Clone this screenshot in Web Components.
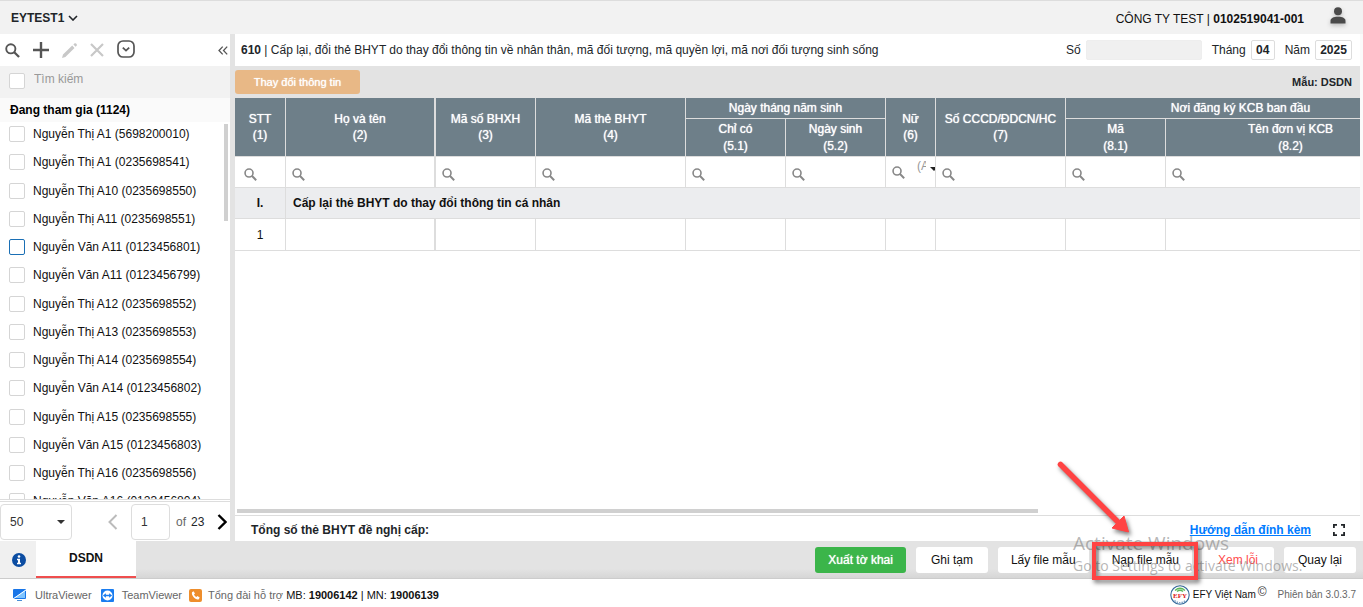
<!DOCTYPE html>
<html lang="vi">
<head>
<meta charset="utf-8">
<meta name="viewport" content="width=device-width, initial-scale=1">
<title>EFY - BHXH 610</title>
<style>
  html, body { margin: 0; }
  body {
    font: 12px/16px "Liberation Sans", Arial, sans-serif;
    color: #212529;
    background: #fff;
  }
</style>
</head>
<body>
<efy-app></efy-app>

<script>
const define = (name, html, setup) => {
  const tpl = document.createElement('template');
  tpl.innerHTML = `<style>*{box-sizing:border-box}</style>${html}`;
  customElements.define(name, class extends HTMLElement {
    constructor() {
      super();
      this.attachShadow({ mode: 'open' }).append(tpl.content.cloneNode(true));
    }
    connectedCallback() { if (setup) setup(this, this.shadowRoot); }
  });
};

/* Icons: [width, height, svg content] */
const ICONS = {
  search: [16, 16, '<circle cx="6.2" cy="6.2" r="4.9" fill="none" stroke="currentColor" stroke-width="2"/><path d="M9.6 9.6l5.400 5.400" stroke="currentColor" stroke-width="2.4"/>'],
  plus: [16, 16, '<path d="M8 0v16M0 8h16" stroke="currentColor" stroke-width="2.4"/>'],
  pencil: [15, 15, '<path d="M0 15l1-3.4L10.2 2.600l2.300 2.300L3.400 14zM11.400 1.500l.9-.9a1.300 1.300 0 0 1 1.800 0l.4.4a1.300 1.300 0 0 1 0 1.800l-.9.9z" fill="currentColor"/>'],
  close: [14, 14, '<path d="M1 1l12 12M13 1L1 13" stroke="currentColor" stroke-width="2.2"/>'],
  more: [18, 18, '<rect x="1" y="1" width="16" height="16" rx="5" fill="none" stroke="currentColor" stroke-width="1.7"/><path d="M5.800 7.600L9 10.600l3.200-3" fill="none" stroke="currentColor" stroke-width="1.800"/>'],
  collapse: [10, 9, '<path d="M4.700.6L1 4.500l3.700 3.900M9.200.6L5.500 4.500l3.700 3.900" fill="none" stroke="currentColor" stroke-width="1.300"/>'],
  down: [10, 6, '<path d="M1 1l4 4 4-4" fill="none" stroke="currentColor" stroke-width="1.600"/>'],
  prev: [10, 16, '<path d="M8.500 1L1.500 8l7 7" fill="none" stroke="currentColor" stroke-width="2"/>'],
  next: [10, 16, '<path d="M1.500 1l7 7-7 7" fill="none" stroke="currentColor" stroke-width="2.400"/>'],
  user: [16, 17, '<circle cx="8" cy="4.300" r="4" fill="currentColor"/><path d="M.5 16.500v-2.700c0-2.500 3-4 7.500-4s7.500 1.500 7.500 4v2.700z" fill="currentColor"/>'],
  caret: [8, 4, '<path d="M0 0h8L4 4z" fill="currentColor"/>'],
  info: [14, 14, '<circle cx="7" cy="7" r="7" fill="#0c4da2"/><circle cx="7" cy="3.500" r="1.300" fill="#fff"/><path d="M5 5.800h3v4h1v1.500H5V9.800h1V7.300H5z" fill="#fff"/>'],
  full: [12, 12, '<path d="M.9 4V.9H4M8 .9h3.100V4M11.100 8v3.100H8M4 11.100H.9V8" fill="none" stroke="currentColor" stroke-width="1.800"/>'],
  ultra: [14, 14, '<rect x="0" y="1" width="13" height="10" rx="1" fill="#1976e8"/><path d="M1 10L12 2v8z" fill="#7fc4ff"/><path d="M0 11L13 2" stroke="#fff" stroke-width="1"/><path d="M4 12h5v1H4z" fill="#4a8fd8"/>'],
  team: [13, 13, '<rect width="13" height="13" rx="1" fill="#1a7df0"/><circle cx="6.500" cy="6.500" r="5" fill="#fff"/><path d="M1.900 6.500l3-2.300v1.500h3.200V4.200l3 2.300-3 2.300V7.300H4.900v1.500z" fill="#1a7df0"/>'],
  phone: [13, 13, '<rect width="13" height="13" rx="2" fill="#ee8e2c"/><path d="M3 3.200l1.500-1 1.500 2.300-1 1c.4 1 1.300 2 2.400 2.500l1-.9L10.700 8.600 9.800 10.300C7 11.600 2 6.500 3 3.200z" fill="#fff"/>'],
};
customElements.define('ui-icon', class extends HTMLElement {
  connectedCallback() {
    if (this.shadowRoot) return;
    const [w, h, body] = ICONS[this.getAttribute('name')];
    const size = +this.getAttribute('size') || w;
    this.attachShadow({ mode: 'open' }).innerHTML =
      `<style>:host{display:inline-flex;flex:none}svg{display:block}</style>
       <svg width="${size}" height="${Math.round(size * h / w)}" viewBox="0 0 ${w} ${h}" aria-hidden="true">${body}</svg>`;
  }
});

define('top-bar', `
<style>
  :host { display: flex; align-items: center; justify-content: space-between; height: 34px;
    background: #f2f2f2; border-top: 1px solid #ddd; padding: 0 17px 0 11px; }
  button { all: unset; display: flex; align-items: center; gap: 4px; font-weight: bold; }
  .right { display: flex; align-items: center; gap: 26px; color: #111; padding-top: 2px; }
  .user { color: #4a4a4a; filter: drop-shadow(0 2px 2px #bbb); padding-bottom: 6px; }
</style>
<button type="button">EYTEST1 <ui-icon name="down"></ui-icon></button>
<div class="right"><span>CÔNG TY TEST | <b>0102519041-001</b></span>
<ui-icon class="user" name="user"></ui-icon></div>`);

define('member-row', `
<style>
  :host { display: block; height: 28px; }
  label { display: flex; align-items: center; gap: 8px; height: 24px; padding-left: 9px; color: #111; white-space: nowrap; }
  input { appearance: none; flex: none; width: 16px; height: 16px; margin: 0; border: 1px solid #d5d5d5; border-radius: 2px; background: #fff; }
  :host([focused]) input { border-color: #1a6fb5; }
</style>
<label><input type="checkbox"><span><slot></slot></span></label>`);

const MEMBERS = ['Nguyễn Thị A1 (5698200010)', 'Nguyễn Thị A1 (0235698541)', 'Nguyễn Thị A10 (0235698550)',
  'Nguyễn Thị A11 (0235698551)', 'Nguyễn Văn A11 (0123456801)', 'Nguyễn Văn A11 (0123456799)',
  'Nguyễn Thị A12 (0235698552)', 'Nguyễn Thị A13 (0235698553)', 'Nguyễn Thị A14 (0235698554)',
  'Nguyễn Văn A14 (0123456802)', 'Nguyễn Thị A15 (0235698555)', 'Nguyễn Văn A15 (0123456803)',
  'Nguyễn Thị A16 (0235698556)', 'Nguyễn Văn A16 (0123456804)'];

define('side-panel', `
<style>
  :host { display: flex; flex-direction: column; width: 230px; flex: none; min-height: 0; background: #fff; }
  button { all: unset; display: flex; align-items: center; }
  .tools { display: flex; align-items: center; gap: 13px; height: 32px; padding: 0 2px 0 5px; color: #555; flex: none; }
  .tools .off { color: #c8c8c8; }
  .tools :last-child { margin-left: auto; }
  .tools .more { padding-bottom: 2px; }
  .search { display: flex; align-items: center; gap: 8px; height: 32px; padding: 0 0 2px 9px; background: #f2f2f2; flex: none; }
  .search [type=checkbox] { appearance: none; width: 16px; height: 16px; margin: 0; border: 1px solid #d5d5d5; border-radius: 2px; background: #fff; }
  .search [type=text] { flex: 1; min-width: 0; border: 0; padding: 0 1px 4px; background: none; font: inherit; outline: 0; }
  ::placeholder { color: #999; opacity: 1; }
  h2 { margin: 0; padding-left: 10px; font-size: 12px; line-height: 24px; background: #fafafa; color: #000; flex: none; }
  .list { position: relative; flex: 1 1 0; min-height: 0; overflow: hidden; }
  .thumb { position: absolute; top: 2px; right: 2px; width: 4px; height: 97px; background: #d0d0d0; }
  member-row:nth-of-type(4n+2) { height: 29px; }
  .pager { display: flex; align-items: center; height: 42px; padding-top: 3px; flex: none; border-top: 1px solid #ddd; position: relative; }
  .rule { position: absolute; left: 0; right: 0; top: 1px; height: 1px; background: #ddd; }
  .size { display: flex; align-items: center; position: relative; }
  .size ui-icon { position: absolute; right: 7px; color: #333; }
  select, .page { appearance: none; height: 36px; border: 1px solid #ddd; border-radius: 4px; background: #fff; font: inherit; color: #333; margin: 0; padding: 0 9px; }
  select { width: 72px; } .page { width: 39px; }
  .prev { color: #bbb; margin: 0 13px 0 36px; } .next { color: #000; margin-left: 13px; }
  .of { color: #666; margin: 0 5px 0 6px; }
</style>
<div class="tools">
  <button aria-label="Tìm"><ui-icon name="search" size="15"></ui-icon></button>
  <button aria-label="Thêm"><ui-icon name="plus"></ui-icon></button>
  <button class="off" aria-label="Sửa"><ui-icon name="pencil"></ui-icon></button>
  <button class="off" aria-label="Xóa"><ui-icon name="close"></ui-icon></button>
  <button class="more" aria-label="Thao tác khác"><ui-icon name="more"></ui-icon></button>
  <button aria-label="Thu gọn"><ui-icon name="collapse"></ui-icon></button>
</div>
<div class="search"><input type="checkbox" aria-label="Chọn tất cả"><input type="text" placeholder="Tìm kiếm" aria-label="Tìm kiếm"></div>
<h2>Đang tham gia (1124)</h2>
<div class="list"><div class="thumb"></div></div>
<div class="pager">
  <span class="rule"></span>
  <span class="size"><select aria-label="Số dòng"><option>50</option></select><ui-icon name="caret"></ui-icon></span>
  <button class="prev" aria-label="Trang trước"><ui-icon name="prev"></ui-icon></button>
  <input class="page" value="1" aria-label="Trang">
  <span class="of">of</span><span>23</span>
  <button class="next" aria-label="Trang sau"><ui-icon name="next"></ui-icon></button>
</div>`, (el, root) => {
  const list = root.querySelector('.list');
  MEMBERS.forEach((name, i) => {
    const row = document.createElement('member-row');
    row.textContent = name;
    if (i === 4) row.setAttribute('focused', '');
    list.append(row);
  });
});

define('form-heading', `
<style>
  :host { display: flex; align-items: center; justify-content: space-between; height: 32px; padding: 0 8px 0 6px; background: #fff; flex: none; white-space: nowrap; }
  .period { display: flex; align-items: center; gap: 5px; }
  label + input + label { margin-left: 5px; }
  input { height: 20px; border: 1px solid #ddd; border-radius: 2px; padding: 0; font: bold 12px "Liberation Sans", Arial, sans-serif; color: #212529; text-align: center; background: #fff; }
  #no { width: 116px; background: #f0f0f0; border-color: #eee; } #month { width: 24px; } #year { width: 37px; }
</style>
<span><b>610</b> | Cấp lại, đổi thẻ BHYT do thay đổi thông tin về nhân thân, mã đối tượng, mã quyền lợi, mã nơi đối tượng sinh sống</span>
<div class="period"><label for="no">Số</label><input id="no" disabled><label for="month">Tháng</label><input id="month" value="04"><label for="year">Năm</label><input id="year" value="2025"></div>`);

define('form-toolbar', `
<style>
  :host { display: flex; align-items: center; justify-content: space-between; height: 32px; padding-right: 8px; background: #e3e3e3; flex: none; font-size: 11px; font-weight: bold; }
  button { width: 125px; height: 24px; border: 0; border-radius: 3px; padding: 0; background: #e8b886; color: #fff; font: inherit; font-weight: normal; text-shadow: 0 0 1px #fff; }
</style>
<button type="button">Thay đổi thông tin</button><span>Mẫu: DSDN</span>`);

define('declaration-grid', `
<style>
  :host { display: block; flex: 1 1 0; min-height: 0; overflow: hidden; position: relative; background: #fff; }
  table { table-layout: fixed; width: 1180px; border-collapse: separate; border-spacing: 0; color: #111; }
  th, td { padding: 0; border: 0 solid #ddd; border-left-width: 1px; border-bottom-width: 1px; }
  .first { border-left-width: 0; } .pin { border-right-width: 1px; }
  th { background: #6e7f89; color: #fff; line-height: 16px; font-weight: normal; text-shadow: 0 0 1px #fff; }
  .sub th { line-height: 17px; }
  .h1 { height: 21px; } .h2 { height: 38px; }
  .filter td { height: 31px; }
  .box { display: flex; align-items: center; gap: 4px; height: 30px; padding-left: 6px; overflow: hidden; color: #888; }
  .first .box { padding-left: 9px; }
  .box ui-icon { padding-top: 4px; }
  .box input { flex: 1; min-width: 0; width: 0; border: 0; padding: 0; background: none; font: inherit; outline: 0; }
  .gender ui-icon:first-child { padding-top: 0; }
  .gender { gap: 0; }
  select { appearance: none; border: 0; margin: 0 4px 13px 12px; padding: 0; background: none; font: inherit; color: #999; width: 9px; flex: none; overflow: hidden; }
  .gender ui-icon + select + ui-icon { color: #222; padding-top: 0; margin-bottom: 6px; }
  .group td { height: 31px; background: #ecedef; font-weight: bold; }
  .group td + td { padding-left: 7px; border-left-color: #ddd; }
  .data td { height: 32px; }
  .c { text-align: center; }
  .bar { position: absolute; left: 2px; right: 322px; bottom: 2px; height: 4px; background: #d0d0d0; }
</style>
<table>
  <colgroup><col style="width:50px"><col style="width:150px"><col style="width:100px"><col style="width:150px"><col style="width:100px"><col style="width:100px"><col style="width:50px"><col style="width:130px"><col style="width:100px"><col style="width:250px"></colgroup>
  <thead>
    <tr class="h1"><th class="first" rowspan="2">STT<br>(1)</th><th class="pin" rowspan="2">Họ và tên<br>(2)</th><th rowspan="2">Mã số BHXH<br>(3)</th><th rowspan="2">Mã thẻ BHYT<br>(4)</th><th colspan="2">Ngày tháng năm sinh</th><th rowspan="2">Nữ<br>(6)</th><th rowspan="2">Số CCCD/ĐDCN/HC<br>(7)</th><th colspan="2">Nơi đăng ký KCB ban đầu</th></tr>
    <tr class="h2 sub"><th>Chỉ có<br>(5.1)</th><th>Ngày sinh<br>(5.2)</th><th>Mã<br>(8.1)</th><th>Tên đơn vị KCB<br>(8.2)</th></tr>
  </thead>
  <tbody>
    <tr class="filter"></tr>
    <tr class="group"><td class="first c">I.</td><td colspan="9">Cấp lại thẻ BHYT do thay đổi thông tin cá nhân</td></tr>
    <tr class="data"><td class="first c">1</td><td class="pin"></td><td></td><td></td><td></td><td></td><td></td><td></td><td></td><td></td></tr>
  </tbody>
</table>
<div class="bar"></div>`, (el, root) => {
  const labels = ['STT', 'Họ và tên', 'Mã số BHXH', 'Mã thẻ BHYT', 'Chỉ có', 'Ngày sinh', 'Nữ', 'Số CCCD', 'Mã', 'Tên đơn vị KCB'];
  root.querySelector('.filter').innerHTML = labels.map((label, i) =>
    `<td class="${i === 0 ? 'first' : i === 1 ? 'pin' : ''}"><div class="box ${i === 6 ? 'gender' : ''}"><ui-icon name="search" size="13"></ui-icon>${
      i === 6 ? `<select aria-label="${label}"><option>(All)</option></select><ui-icon name="caret"></ui-icon>` : `<input aria-label="${label}">`}</div></td>`).join('');
});

define('total-bar', `
<style>
  :host { display: flex; align-items: center; height: 26px; padding: 2px 15px 0 16px; border-top: 1px solid #ddd; background: #fff; flex: none; font-weight: bold; }
  a { color: #007bff; margin-left: auto; }
  button { all: unset; display: flex; margin-left: 22px; }
</style>
<span>Tổng số thẻ BHYT đề nghị cấp:</span><a href="#huong-dan">Hướng dẫn đính kèm</a>
<button aria-label="Toàn màn hình"><ui-icon name="full"></ui-icon></button>`);

define('action-bar', `
<style>
  :host { display: flex; align-items: stretch; height: 37px; background: linear-gradient(#e3e3e3 28px, #d6d6d6); flex: none; }
  .info { all: unset; display: flex; align-items: center; justify-content: center; width: 36px; padding-left: 1px; box-sizing: border-box; background: #f0f0f0; }
  .tab { all: unset; box-sizing: border-box; width: 100px; padding-bottom: 2px; text-align: center; font-weight: bold; background: #fff; border-bottom: 2px solid #ef4e4e; color: #111; }
  .actions { display: flex; align-items: center; gap: 10px; margin-left: auto; padding: 1px 7px 0 0; }
  .actions button { min-width: 72px; height: 26px; border: 0; border-radius: 3px; padding: 0 13px; background: #fff; font: inherit; color: #111; }
  .actions .export { background: #3bb54a; color: #fff; text-shadow: 0 0 1px #fff; }
  .actions .error { color: #ff4d4d; }
</style>
<button class="info" aria-label="Thông tin"><ui-icon name="info"></ui-icon></button>
<button class="tab">DSDN</button>
<div class="actions"><button class="export">Xuất tờ khai</button><button>Ghi tạm</button><button>Lấy file mẫu</button><button>Nạp file mẫu</button><button class="error">Xem lỗi</button><button>Quay lại</button></div>`);

define('status-bar', `
<style>
  :host { display: flex; align-items: center; height: 29px; padding: 4px 7px 0 13px; border-top: 1px solid #ccc; background: #fff; flex: none; font-size: 11px; color: #666; }
  a { display: flex; align-items: center; gap: 8px; color: inherit; text-decoration: none; margin-right: 9px; }
  .call { display: flex; align-items: center; gap: 6px; margin-left: -2px; } .call b, .dark { color: #111; }
  .right { display: flex; align-items: center; margin-left: auto; font-size: 10px; }
  .brand { color: #111; margin: 0 2px 0 3px; } .mark { font-size: 12px; margin: 0 11px 6px 0; color: #333; }
</style>
<a href="#ultraviewer"><ui-icon name="ultra"></ui-icon>UltraViewer</a>
<a href="#teamviewer"><ui-icon name="team"></ui-icon>TeamViewer</a>
<span class="call"><ui-icon name="phone"></ui-icon><span>Tổng đài hỗ trợ <span class="dark">MB:</span> <b>19006142</b> <span class="dark">| MN:</span> <b>19006139</b></span></span>
<span class="right">
  <svg width="20" height="20" viewBox="0 0 20 20" role="img" aria-label="EFY"><circle cx="10" cy="10" r="9.200" fill="#fff" stroke="#356a9c" stroke-width="1.100"/><path d="M5 5.500q5-4.500 10 0M7 6.500q3-2.500 6 0" fill="none" stroke="#5bb85b" stroke-width="1.300"/><path d="M4.500 15.500q5.500 4.500 11 0" fill="none" stroke="#7fa3c7" stroke-width="1.500" stroke-dasharray="1.500 1"/><text x="10" y="12.500" text-anchor="middle" font-family="Liberation Serif, serif" font-size="7" font-weight="bold" fill="#d22">EFY</text></svg>
  <span class="brand">EFY Việt Nam</span><span class="mark">©</span><span>Phiên bản 3.0.3.7</span>
</span>`);

/* Guide arrow, highlight frame and system watermark that float above the page */
define('screen-overlay', `
<style>
  :host { position: absolute; right: 0; bottom: 0; width: 310px; height: 150px; pointer-events: none; }
  .water { position: absolute; left: 20px; top: 73px; color: rgba(120,120,120,.55); font-family: "Open Sans", "Noto Sans", sans-serif; white-space: nowrap; }
  .water p { margin: 0; } .big { font-size: 19px; line-height: 26px; } .small { font-size: 14px; line-height: 20px; }
  svg { position: absolute; left: 0; top: 0; filter: drop-shadow(2px 3px 2px rgba(0,0,0,.5)); }
</style>
<div class="water"><p class="big">Activate Windows</p><p class="small">Go to Settings to activate Windows.</p></div>
<svg width="310" height="150" viewBox="0 0 310 150" aria-hidden="true"><path d="M7.500 7.500L65 65" stroke="#ff4343" stroke-width="5.500" stroke-linecap="round"/><path d="M75.500 75L59 71 71 59z" fill="#ff4343" stroke="#ff4343"/><rect x="41" y="87" width="102" height="34" fill="none" stroke="#ff4343" stroke-width="4"/></svg>`);

define('efy-app', `
<style>
  :host { display: flex; flex-direction: column; height: 100vh; position: relative; overflow: hidden; }
  .body { display: flex; flex: 1; min-height: 0; padding-right: 3px; background: #fafafa; }
  main { display: flex; flex-direction: column; flex: 1; min-width: 0; border-left: 5px solid #e3e3e3; }
</style>
<top-bar></top-bar>
<div class="body"><side-panel></side-panel>
<main><form-heading></form-heading><form-toolbar></form-toolbar><declaration-grid></declaration-grid><total-bar></total-bar></main></div>
<action-bar></action-bar><status-bar></status-bar><screen-overlay></screen-overlay>`);
</script>
</body>
</html>
